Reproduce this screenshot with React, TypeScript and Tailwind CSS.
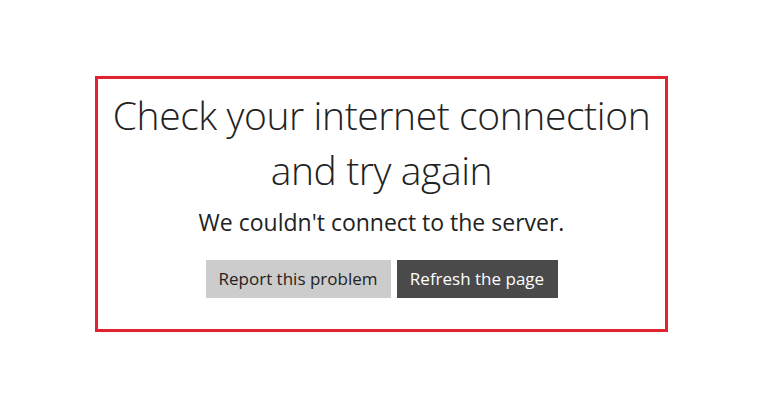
export default function App() {
  return (
    <div className="w-[757px] h-[400px] bg-white flex" style={{ fontFamily: '"Open Sans", "Noto Sans", sans-serif' }}>
      <div className="ml-[95px] mt-[76px] w-[573px] h-[256px] border-[3px] border-[#e1222f] flex flex-col items-center">
        <div className="mt-[8px] text-[39px] leading-[55px] tracking-[-0.4px] font-light text-[#222] text-center">
          Check your internet connection<br />and try again
        </div>
        <div className="mt-[10px] text-[23px] leading-[30px] text-[#222]">We couldn't connect to the server.</div>
        <div className="mt-[23px] flex gap-[6px]">
          <button className="w-[185px] h-[38px] bg-[#cccccc] text-[#222] text-[17px]">Report this problem</button>
          <button className="w-[161px] h-[38px] bg-[#4a4a4a] text-white text-[17px]">Refresh the page</button>
        </div>
      </div>
    </div>
  );
}
